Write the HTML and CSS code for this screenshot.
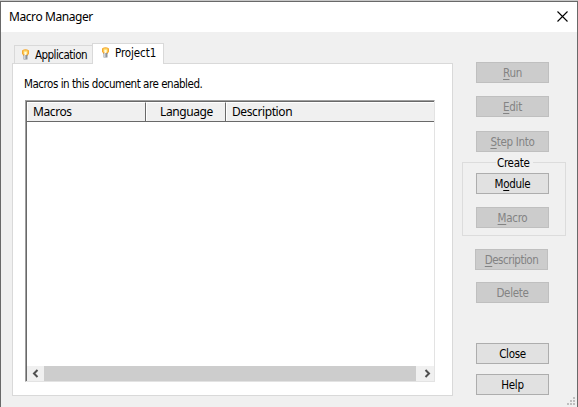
FILE: index.html
```html
<!DOCTYPE html>
<html lang="en">
<head>
<meta charset="utf-8">
<title>Macro Manager</title>
<link rel="stylesheet" href="styles.css">
</head>
<body>
<svg class="defs" width="0" height="0" aria-hidden="true">
  <symbol id="bulb" viewBox="0 0 9 11">
    <path d="M1 1.500Q4.500-1 8 1.500V4.500L6.500 7H2.500L1 4.500Z" fill="#f5a930"/>
    <rect x="2.500" y="1.500" width="4" height="3.500" fill="#ffe47c"/>
    <rect x="3.500" y="3" width="2" height="3" fill="#fffbe0"/>
    <rect x="2.500" y="6" width="4" height="4.500" fill="#8e9399"/>
    <rect x="3" y="6" width="1.500" height="4" fill="#d0d4d8"/>
  </symbol>
</svg>
<div class="backdrop"></div>
<main class="dialog">
  <header class="titlebar">
    <span class="title">Macro Manager</span>
    <svg class="close" width="11" height="11" viewBox="0 0 11 11"><path d="M.5.5l10 10M10.500.5l-10 10" stroke="#000" stroke-width="1.100" fill="none"/></svg>
  </header>
  <div class="content">
    <section class="left">
      <nav class="tabs">
        <div class="tab"><svg class="bulb" width="9" height="11"><use href="#bulb"/></svg><span class="t-app">Application</span></div>
        <div class="tab active"><svg class="bulb" width="9" height="11"><use href="#bulb"/></svg><span class="t-proj">Project1</span></div>
      </nav>
      <div class="panel">
        <p class="note">Macros in this document are enabled.</p>
        <div class="list">
          <div class="head">
            <div class="col c1"><span class="h-mac">Macros</span></div>
            <div class="col c2"><span class="h-lang">Language</span></div>
            <div class="col c3"><span class="h-desc">Description</span></div>
          </div>
          <div class="rows"></div>
          <div class="scroll">
            <svg width="17" height="15" viewBox="0 0 17 15"><path d="M10.500 4L7 7.500l3.500 3.500" stroke="#505050" stroke-width="2" fill="none"/></svg>
            <div class="thumb"></div>
            <svg width="18" height="15" viewBox="0 0 18 15"><path d="M9.500 4L13 7.500 9.500 11" stroke="#505050" stroke-width="2" fill="none"/></svg>
          </div>
        </div>
      </div>
    </section>
    <aside class="side">
      <button class="btn run" disabled><span><u>R</u>un</span></button>
      <button class="btn edit" disabled><span><u>E</u>dit</span></button>
      <button class="btn step" disabled><span><u>S</u>tep Into</span></button>
      <div class="group">
        <div class="legend"><span>Create</span></div>
        <button class="btn module"><span>M<u>o</u>dule</span></button>
        <button class="btn macro" disabled><span><u>M</u>acro</span></button>
      </div>
      <button class="btn description" disabled><span><u>D</u>escription</span></button>
      <button class="btn delete" disabled><span>Delete</span></button>
      <button class="btn done"><span>Close</span></button>
      <button class="btn help"><span>Help</span></button>
    </aside>
  </div>
  <svg class="grip" width="8" height="8" viewBox="0 0 8 8" fill="#bfbfbf"><path d="M6 0h2v2h-2zM3 3h2v2h-2zM6 3h2v2h-2zM0 6h2v2h-2zM3 6h2v2h-2zM6 6h2v2h-2z"/></svg>
</main>
</body>
</html>
```
FILE: styles.css
```css
* { box-sizing: border-box; }
body {
  margin: 0;
  width: 578px;
  height: 407px;
  overflow: hidden;
  font: 11.5px/14px "DejaVu Sans Condensed", "DejaVu Sans", sans-serif;
  font-stretch: condensed;
  letter-spacing: -0.3px;
  color: #000;
}
.defs { position: absolute; }
.backdrop { height: 1px; background: #c8c8c8; }
.dialog {
  position: relative;
  height: 406px;
  border: 1px solid #696969;
  border-bottom: 0;
  background: #f0f0f0;
}
.titlebar {
  height: 30px;
  display: flex;
  justify-content: space-between;
  padding: 7px 9px 0 8px;
  background: #fff;
  font: 12px/16px "Noto Sans", sans-serif;
  letter-spacing: -0.42px;
}
.close { margin-top: 2px; }
.content { display: flex; }
.left { flex: none; width: 441px; margin-left: 11px; padding-top: 11px; }
.tabs { display: flex; align-items: flex-end; height: 21px; padding-left: 2px; margin-bottom: -1px; }
.tab {
  display: flex;
  width: 79px;
  height: 19px;
  padding: 2px 0 0 6px;
  border: 1px solid #d9d9d9;
  border-right: 0;
  background: #f0f0f0;
}
.tab.active { position: relative; width: 72px; height: 21px; margin-left: -1px; border-right: 1px solid #d9d9d9; border-bottom: 0; background: #fff; padding-left: 8px; }
.bulb { margin-top: 1px; }
.tab span { margin-left: 5px; white-space: nowrap; }
.tab .t-app { letter-spacing: -0.53px; }
.tab.active span { margin-left: 5px; letter-spacing: -0.1px; }
.panel { height: 333px; border: 1px solid #d9d9d9; background: #fff; padding: 13px 17px 0 12px; }
.note { margin: 0 0 9px -1px; white-space: nowrap; letter-spacing: -0.47px; }
.list {
  height: 282px;
  display: flex;
  flex-direction: column;
  border: 1px solid;
  border-color: #a0a0a0 #e3e3e3 #e3e3e3 #a0a0a0;
  box-shadow: inset 1px 1px #696969;
  padding: 1px 0 0 1px;
}
.head { height: 20px; display: flex; border-bottom: 1px solid #696969; background: #f0f0f0; font: 12px/17px "Noto Sans", sans-serif; letter-spacing: -0.4px; }
.col { border-top: 1px solid #fff; border-left: 1px solid #fff; white-space: nowrap; }
.c1 { width: 119px; padding-left: 5px; border-right: 1px solid #696969; }
.c2 { width: 80px; padding-left: 13px; border-right: 1px solid #696969; }
.c3 { flex: 1; padding-left: 5px; }
.rows { flex: 1; }
.scroll { display: flex; height: 15px; background: #f0f0f0; }
.thumb { flex: 1; background: #cdcdcd; }
.side { width: 124px; padding: 30px 0 0 9px; display: flex; flex-direction: column; }
.btn {
  flex: none;
  width: 73px;
  height: 21px;
  margin: 0 0 0 14px;
  padding: 1px 0 0;
  border: 1px solid #adadad;
  background: #e1e1e1;
  color: #000;
  font: inherit;
  letter-spacing: inherit;
  text-align: center;
}
.btn:disabled { border-color: #bfbfbf; background: #ccc; color: #838383; }
u { text-underline-offset: 2px; text-decoration-thickness: 1px; text-decoration-skip-ink: none; }
.edit { margin-top: 13px; }
.step { margin-top: 14px; }
.group { width: 104px; height: 74px; margin-top: 10px; border: 1px solid #dcdcdc; }
.group .btn { margin-left: 13px; display: block; }
.legend { width: 37px; height: 10px; margin: -6px 0 0 33px; padding-left: 1px; line-height: 13px; background: #f0f0f0; white-space: nowrap; }
.module { margin-top: 6px; }
.macro.btn { margin-top: 13px; }
.description { margin: 13px 0 0 13px; letter-spacing: -0.5px; }
.delete { margin-top: 12px; }
.done { margin-top: 40px; }
.help { margin-top: 10px; }
.grip { position: absolute; right: 2px; bottom: 2px; }
```
